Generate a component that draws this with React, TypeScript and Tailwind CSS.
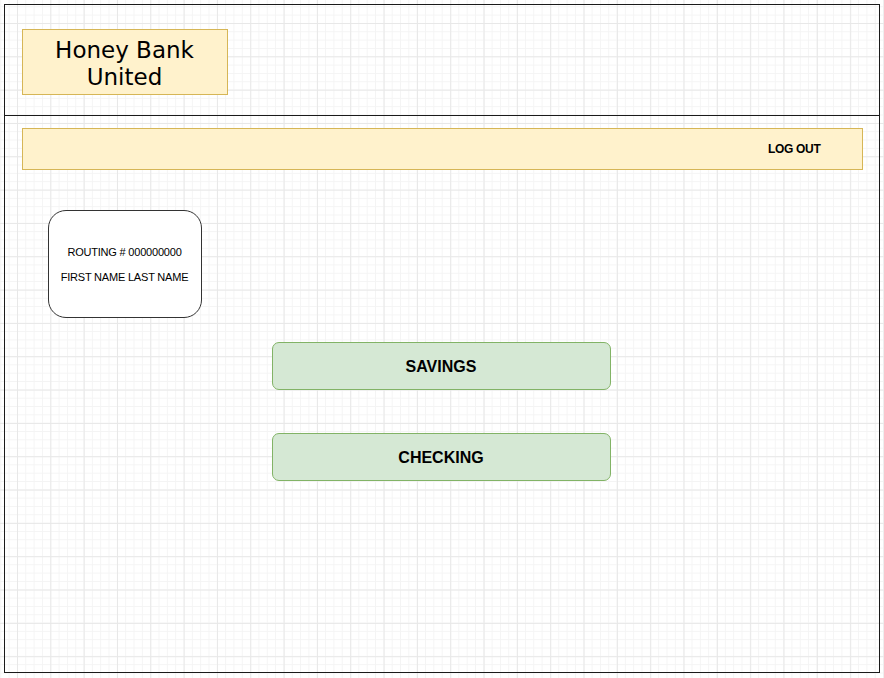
/* Honey Bank United — account overview wireframe */

export default function App() {
  return (
    <div
      className="w-[884px] h-[678px] bg-white pl-[4px] pt-[4px] bg-[linear-gradient(to_right,#e8e8e8_1px,transparent_1px),linear-gradient(to_bottom,#e8e8e8_1px,transparent_1px),linear-gradient(to_right,#f4f4f4_1px,transparent_1px),linear-gradient(to_bottom,#f4f4f4_1px,transparent_1px)] bg-size-[33.33px_33.33px,33.33px_33.33px,8.33px_8.33px,8.33px_8.33px] bg-position-[17px_23px,17px_23px,0.3px_6.3px,0.3px_6.3px]"
      style={{ fontFamily: '"Liberation Sans", Arial, sans-serif' }}
    >
      <div className="w-[876px] h-[669px] border-[1.5px] border-[#1a1a1a] flex flex-col">
        {/* Header with logo */}
        <header className="h-[111px] shrink-0 border-b-[1.5px] border-[#1a1a1a] pl-[16.5px] pt-[23.5px]">
          <div
            className="w-[206px] h-[66px] pt-[5px] bg-[#fff2cc] border border-[#d6b656] flex items-center justify-center text-center text-[23px] leading-[27px] text-black"
            style={{ fontFamily: '"DejaVu Sans", Verdana, sans-serif' }}
          >
            <span>
              Honey Bank
              <br />
              United
            </span>
          </div>
        </header>

        {/* Nav bar */}
        <nav className="ml-[16.5px] mt-[12px] w-[841px] h-[42px] bg-[#fff2cc] border border-[#d6b656] flex items-center justify-end pr-[41px]">
          <span className="text-[12px] font-bold tracking-[-0.3px] text-black">LOG OUT</span>
        </nav>

        {/* Account card */}
        <div className="ml-[42.5px] mt-[40px] w-[154px] h-[108px] bg-white border border-[#333] rounded-[18px] flex flex-col items-center justify-center gap-[13px] text-[11px] leading-[12px] text-black tracking-[-0.2px]">
          <span>ROUTING # 000000000</span>
          <span>FIRST NAME LAST NAME</span>
        </div>

        {/* Accounts */}
        <div className="ml-[266.5px] mt-[24px] flex flex-col gap-[43px]">
          {["SAVINGS", "CHECKING"].map((label) => (
            <button
              key={label}
              className="w-[339px] h-[48px] pt-[2px] bg-[#d5e8d4] border border-[#82b366] rounded-[7px] flex items-center justify-center text-[16px] font-bold text-black"
            >
              {label}
            </button>
          ))}
        </div>
      </div>
    </div>
  );
}
